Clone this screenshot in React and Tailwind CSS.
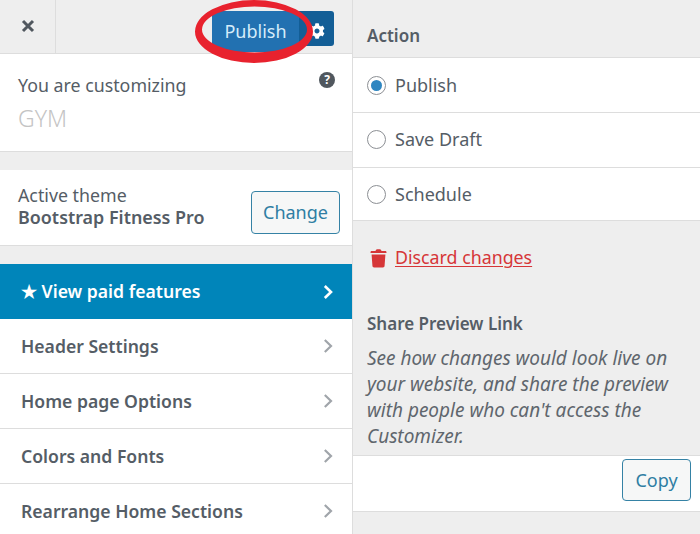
const menu = ['Header Settings', 'Home page Options', 'Colors and Fonts', 'Rearrange Home Sections'];
const actions = [
  { label: 'Publish', row: 'h-[55px]' },
  { label: 'Save Draft', row: 'h-[55px] pb-[1px]' },
  { label: 'Schedule', row: 'h-[53px]' },
];

function Gear() {
  return (
    <svg viewBox="0 0 512 512" className="h-[16px] w-[16px] fill-white">
      <path d="M487 316l-42-25c4-23 4-47 0-70l42-25c5-3 7-9 5-14-11-35-30-67-54-93-4-4-10-5-14-2l-42 24c-18-15-38-27-60-35V28c0-6-4-10-9-11-36-8-73-8-108 0-5 1-9 5-9 11v48c-22 8-42 20-60 35L94 87c-5-3-11-2-14 2-25 26-43 58-54 93-2 5 0 11 5 14l42 25c-4 23-4 47 0 70l-42 25c-5 3-7 9-5 14 11 35 30 67 54 93 4 4 10 5 14 2l42-24c18 15 38 27 60 35v48c0 6 4 10 9 11 36 8 73 8 108 0 5-1 9-5 9-11v-48c22-8 42-20 60-35l42 24c5 3 11 2 14-2 25-26 43-58 54-93 2-5 0-11-5-14zM256 336c-44 0-80-36-80-80s36-80 80-80 80 36 80 80-36 80-80 80z" />
    </svg>
  );
}

function Chevron({ className }) {
  return (
    <svg viewBox="0 0 10 14" fill="none" className={className}>
      <path d="M1.800 1l6.200 6-6.200 6" />
    </svg>
  );
}

export default function App() {
  return (
    <div className="relative flex h-[534px] w-[700px] overflow-hidden bg-[#eeeeee] font-['Noto_Sans',sans-serif] text-[#555d66]">
      {/* left panel */}
      <div className="w-[352px] shrink-0">
        <div className="flex h-[54px] items-start justify-between border-b border-[#dddddd]">
          <div className="flex h-[53px] w-[56px] items-center justify-center border-r border-[#dddddd]">
            <svg viewBox="0 0 14 14" className="mb-[1px] h-[14px] w-[14px] stroke-[#50575e]" strokeWidth="3">
              <path d="M2 2l10 10M12 2L2 12" />
            </svg>
          </div>
          <div className="mt-[11px] mr-[18px] flex h-[35px]">
            <div className="flex h-[41px] w-[87px] items-center justify-center rounded-l-[3px] bg-[#2271b1] text-[18px] text-[#d5ecfa]">Publish</div>
            <div className="flex w-[35px] items-center justify-center rounded-r-[3px] bg-[#135e96] pt-[5px]">
              <Gear />
            </div>
          </div>
        </div>

        <div className="relative h-[98px] border-b border-[#dddddd] bg-white px-[18px] pt-[18px]">
          <div className="text-[17.8px] leading-[27px]">You are customizing</div>
          <div className="mt-[5px] text-[23px] leading-[28px] font-light text-[#c4c4c4]">GYM</div>
          <span className="absolute top-[18px] right-[17px] flex h-[16px] w-[16px] items-center justify-center rounded-full bg-[#50575e] text-[12px] leading-none font-bold text-white">?</span>
        </div>

        <div className="mt-[18px] flex h-[76px] items-start justify-between border-b border-[#dddddd] bg-white pr-[12px] pl-[18px]">
          <div className="mt-[14px] leading-[22px]">
            <div className="text-[17.8px]">Active theme</div>
            <div className="text-[17.9px] font-semibold">Bootstrap Fitness Pro</div>
          </div>
          <button className="mt-[21px] h-[43px] w-[89px] rounded-[4px] border border-[#3582a5] bg-[#f6f7f7] text-[18px] text-[#2f7ea3]">Change</button>
        </div>

        <div className="mt-[18px] flex h-[55px] items-center justify-between bg-[#0085ba] pr-[19px] pl-[21px] text-[17.6px] font-semibold text-white">
          <span>★ View paid features</span>
          <Chevron className="h-[14px] w-[10px] stroke-white stroke-[2.6]" />
        </div>
        {menu.map((item) => (
          <div key={item} className="flex h-[55px] items-center justify-between border-b border-[#dddddd] bg-white pr-[19px] pl-[21px] text-[17.6px] font-semibold">
            <span>{item}</span>
            <Chevron className="h-[14px] w-[10px] stroke-[#a0a5aa] stroke-[2.2]" />
          </div>
        ))}
      </div>

      {/* right panel */}
      <div className="flex-1 border-l border-[#dddddd]">
        <div className="flex h-[57px] items-center pt-[15px] pl-[14px] text-[17px] font-semibold">Action</div>
        <div className="border-t border-[#dddddd] bg-white">
          {actions.map((item, i) => (
            <div key={item.label} className={`flex items-center gap-[9px] border-b border-[#dddddd] pl-[14px] text-[18px] ${item.row}`}>
              <span className="flex h-[19px] w-[19px] items-center justify-center rounded-full border border-[#8c8f94] bg-white">
                {i === 0 && <span className="h-[11px] w-[11px] rounded-full bg-[#2e86c1]" />}
              </span>
              {item.label}
            </div>
          ))}
        </div>
        <div className="mt-[23px] flex items-center gap-[8px] pl-[17px] text-[17.8px] leading-[27px] text-[#d63638]">
          <svg viewBox="0 0 16 18" className="h-[20px] w-[17px] fill-[#d63638]">
            <path d="M5.500 1.600C5.700 1 6.200.7 6.800.7h2.400c.6 0 1.100.3 1.300.9l.4.8h3.600c.5 0 1 .4 1 1v.9H.5v-.9c0-.6.5-1 1-1h3.600zM1.500 5.600h13l-.8 11c0 .8-.7 1.400-1.500 1.400H3.800c-.8 0-1.500-.6-1.500-1.400z" />
          </svg>
          <span className="underline underline-offset-2">Discard changes</span>
        </div>
        <div className="mt-[40px] pl-[14px] text-[17px] leading-[26px] font-semibold">Share Preview Link</div>
        <p className="mt-[8px] pr-[14px] pl-[14px] text-[19px] leading-[26px] text-[#5f666d] italic">
          See how changes would look live on your website, and share the preview with people who can't access the Customizer.
        </p>
        <div className="mt-[6px] flex h-[57px] justify-end border-y border-[#dddddd] bg-white pt-[3px] pr-[9px]">
          <button className="h-[42px] w-[69px] rounded-[4px] border border-[#3582a5] bg-[#f6f7f7] text-[18px] text-[#2f7ea3]">Copy</button>
        </div>
      </div>

      {/* red marker ring over the publish button */}
      <svg viewBox="0 0 700 534" className="pointer-events-none absolute inset-0 h-[534px] w-[700px]">
        <path
          fillRule="evenodd"
          fill="#e8222e"
          d="M195 31.500a59 31.500 0 1 0 118 0a59 31.500 0 1 0-118 0zM202 29.500a52.500 23 0 1 1 105 0a52.500 23 0 1 1-105 0z"
        />
      </svg>
    </div>
  );
}
